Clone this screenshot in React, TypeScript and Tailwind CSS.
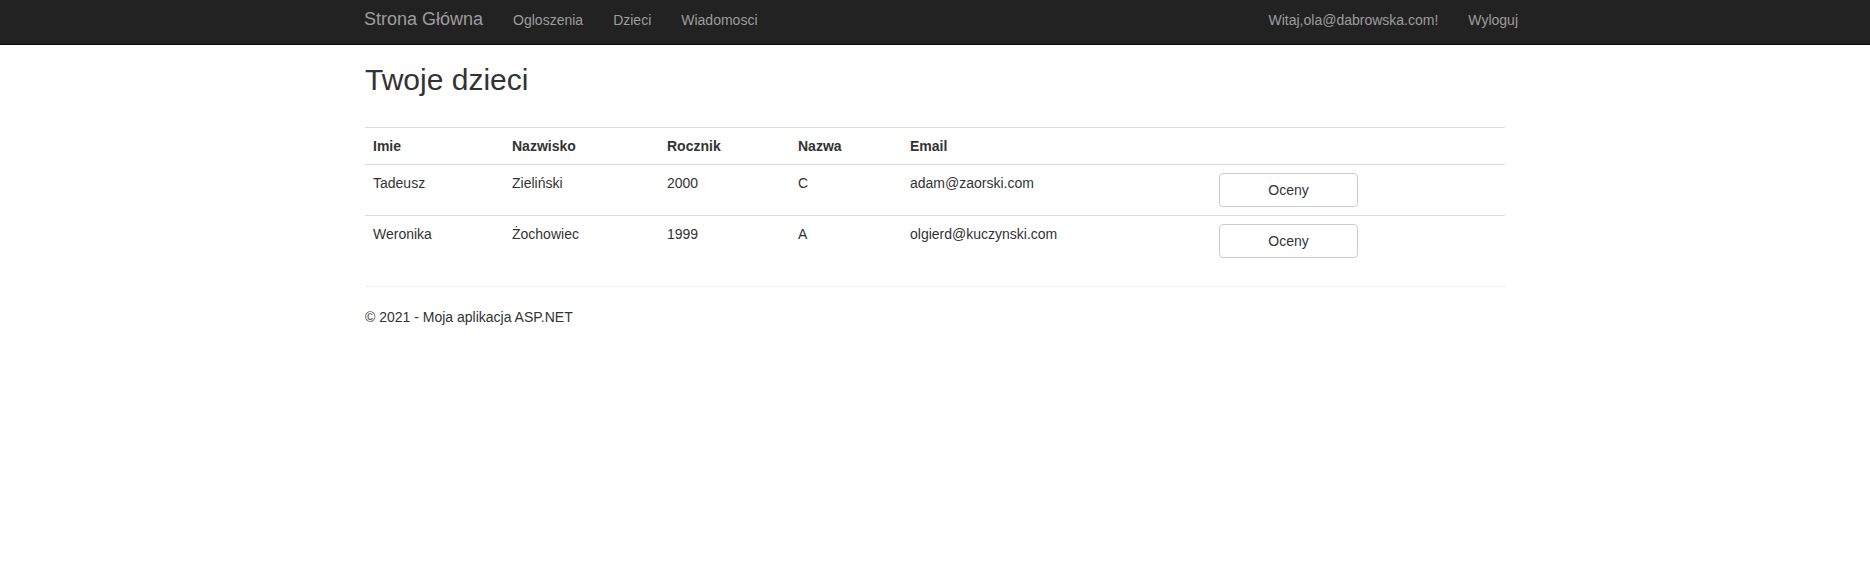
const children = [
  { first: "Tadeusz", last: "Zieliński", year: "2000", klass: "C", email: "adam@zaorski.com" },
  { first: "Weronika", last: "Żochowiec", year: "1999", klass: "A", email: "olgierd@kuczynski.com" },
];

function NavLink({ children }: { children: React.ReactNode }) {
  return (
    <a href="#" className="block px-[15px] pt-[10px] text-[14px] leading-[20px] text-[#9d9d9d]">
      {children}
    </a>
  );
}

export default function App() {
  return (
    <div className="min-h-[570px] bg-white font-['Liberation_Sans',Arial,sans-serif] text-[14px] leading-[20px] text-[#333]">
      {/* Navbar */}
      <nav className="h-[45px] border-b border-[#080808] bg-[#222]">
        <div className="mx-auto flex h-[44px] w-[1170px] items-start justify-between px-[15px]">
          <div className="-ml-px flex items-start">
            <a href="#" className="block pr-[15px] pt-[9px] text-[18px] leading-[20px] text-[#9d9d9d]">
              Strona Główna
            </a>
            <NavLink>Ogloszenia</NavLink>
            <NavLink>Dzieci</NavLink>
            <NavLink>Wiadomosci</NavLink>
          </div>
          <div className="-mr-[13px] flex items-start">
            <NavLink>Witaj,ola@dabrowska.com!</NavLink>
            <a href="#" className="block pl-[15px] pt-[10px] text-[14px] leading-[20px] text-[#9d9d9d]">
              Wyloguj
            </a>
          </div>
        </div>
      </nav>

      {/* Body */}
      <div className="mx-auto w-[1170px] px-[15px]">
        <h2 className="mt-[18px] text-[30px] font-normal leading-[33px] text-[#333]">Twoje dzieci</h2>

        <table className="mt-[31px] w-full table-fixed border-collapse">
          <colgroup>
            <col className="w-[139px]" />
            <col className="w-[155px]" />
            <col className="w-[131px]" />
            <col className="w-[112px]" />
            <col className="w-[309px]" />
            <col />
          </colgroup>
          <tbody>
            <tr>
              {["Imie", "Nazwisko", "Rocznik", "Nazwa", "Email", ""].map((h, i) => (
                <th key={i} className="border-t border-[#ddd] p-[8px] text-left align-bottom font-bold">
                  {h}
                </th>
              ))}
            </tr>
            {children.map((c) => (
              <tr key={c.email}>
                <td className="border-t border-[#ddd] p-[8px] align-top">{c.first}</td>
                <td className="border-t border-[#ddd] p-[8px] align-top">{c.last}</td>
                <td className="border-t border-[#ddd] p-[8px] align-top">{c.year}</td>
                <td className="border-t border-[#ddd] p-[8px] align-top">{c.klass}</td>
                <td className="border-t border-[#ddd] p-[8px] align-top">{c.email}</td>
                <td className="border-t border-[#ddd] p-[8px] align-top">
                  <button
                    type="button"
                    className="block h-[34px] w-[139px] rounded-[4px] border border-[#ccc] bg-white text-[14px] leading-[20px] text-[#333]"
                  >
                    Oceny
                  </button>
                </td>
              </tr>
            ))}
          </tbody>
        </table>

        <hr className="mt-[20px] border-0 border-t border-[#eee]" />
        <footer>
          <p className="mt-[20px]">© 2021 - Moja aplikacja ASP.NET</p>
        </footer>
      </div>
    </div>
  );
}
